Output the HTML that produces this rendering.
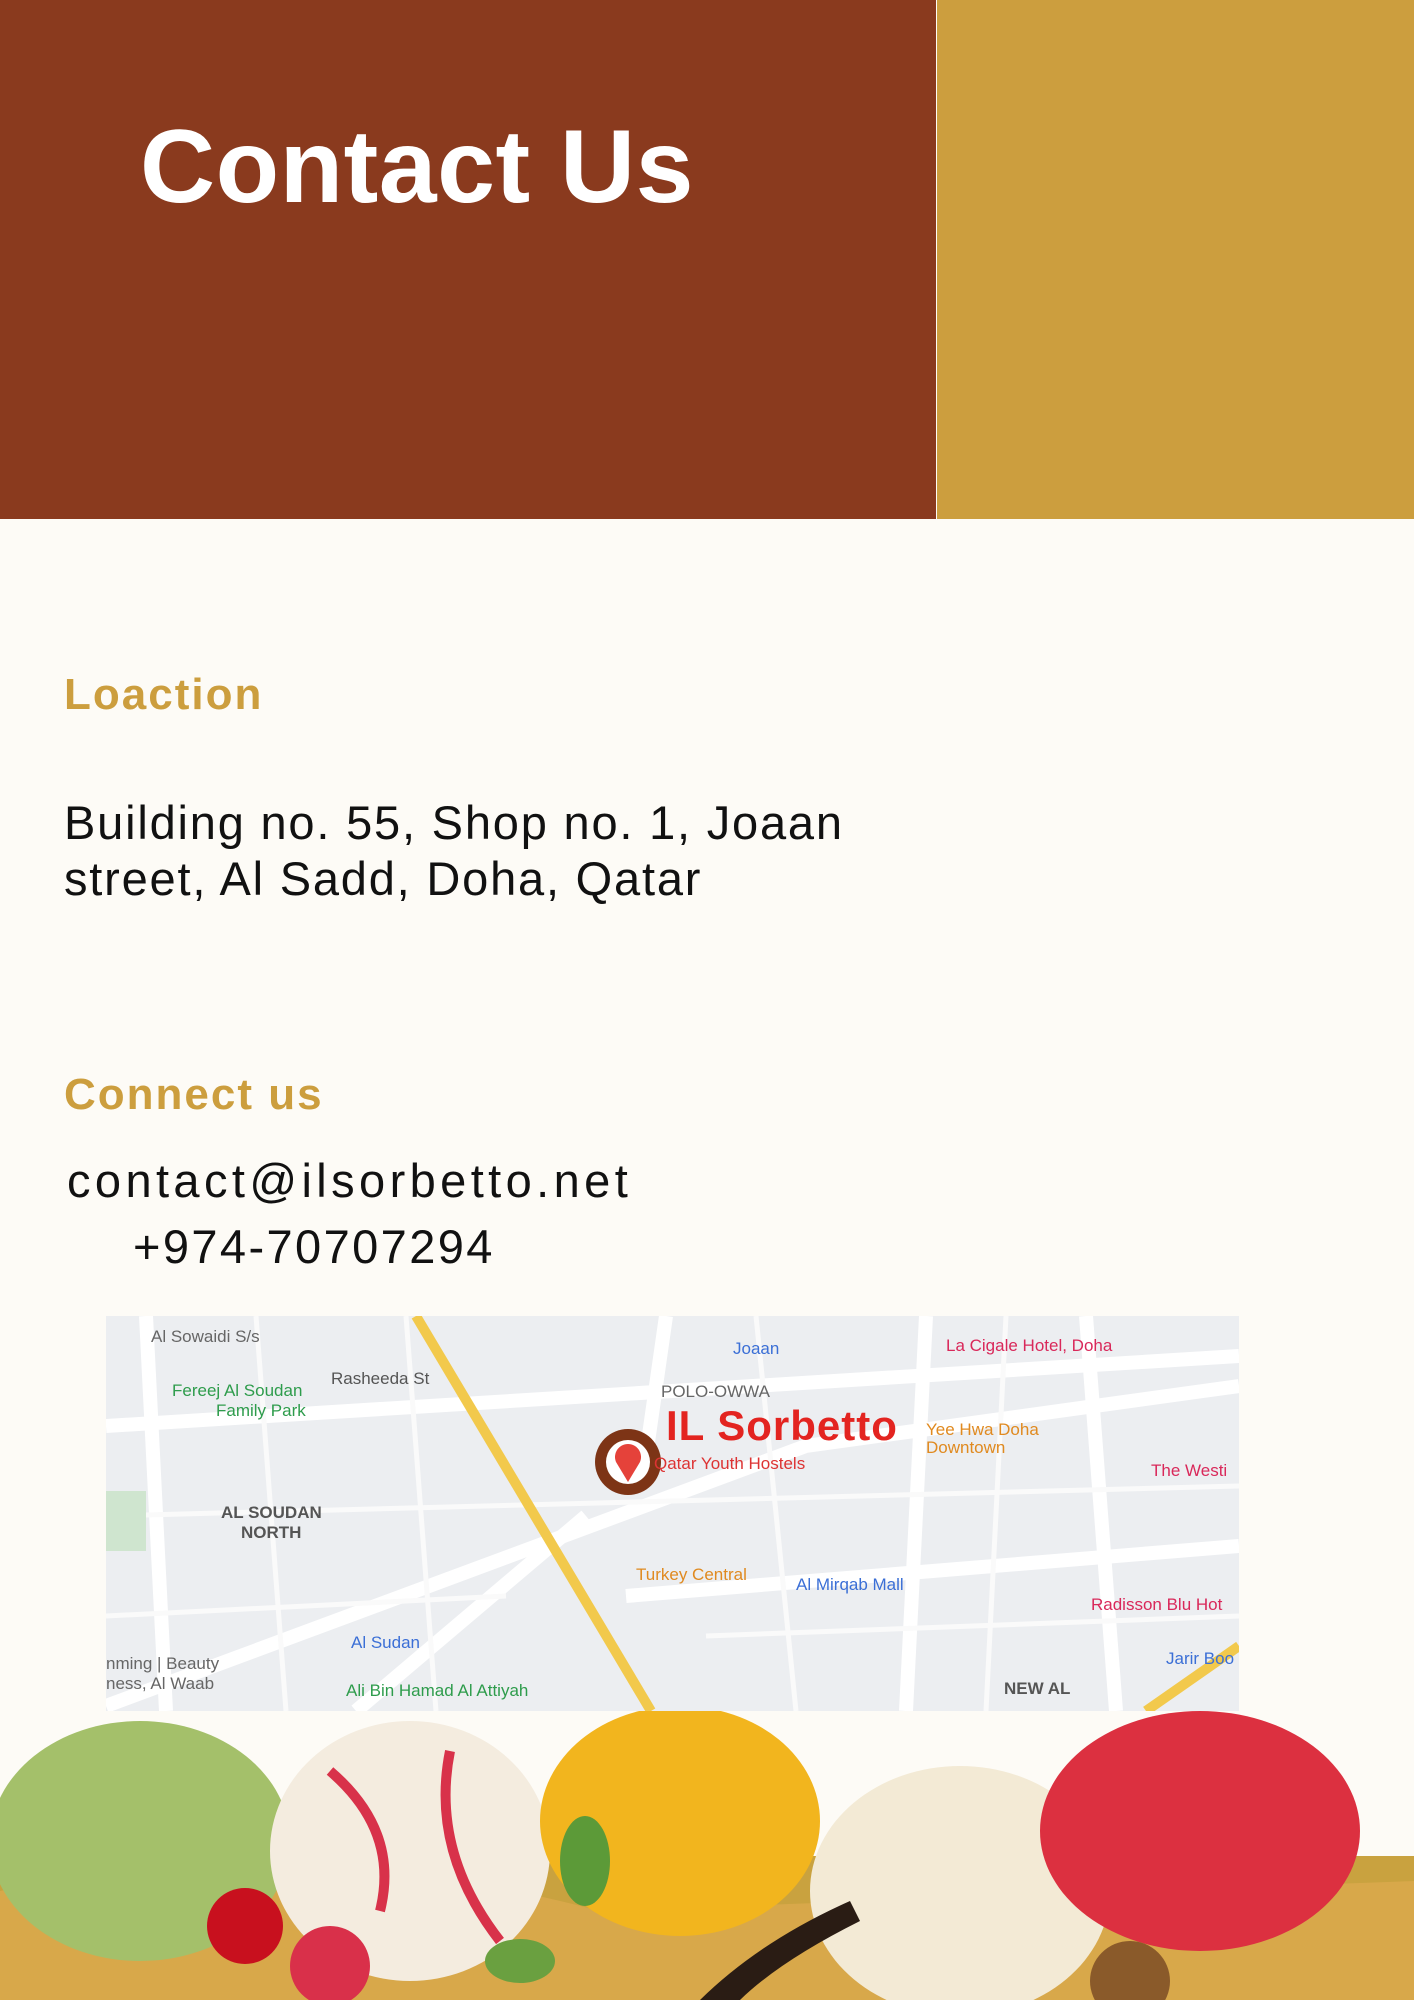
<!DOCTYPE html>
<html><head><meta charset="utf-8"><style>
*{margin:0;padding:0;box-sizing:border-box}
body{width:1414px;height:2000px;background:#fdfbf6;position:relative;overflow:hidden;font-family:"Liberation Sans","Noto Sans CJK SC",sans-serif}
.abs{position:absolute}
h1{position:absolute;left:140px;top:108px;font-size:104px;font-weight:bold;color:#fff;letter-spacing:0.5px}
.h2{position:absolute;left:64px;font-size:44px;font-weight:bold;color:#cc9e3e;letter-spacing:2px}
.t{position:absolute;font-size:47px;color:#111;line-height:56px;white-space:nowrap}
</style></head><body>
<div class="abs" style="left:0;top:0;width:936px;height:519px;background:#8a3a1e"></div>
<div class="abs" style="left:937px;top:0;width:477px;height:519px;background:#cc9e3e"></div>
<h1>Contact Us</h1>
<div class="h2" style="top:670px">Loaction</div>
<div class="t" style="left:64px;top:795px;letter-spacing:1.8px">Building no. 55, Shop no. 1, Joaan<br>street, Al Sadd, Doha, Qatar</div>
<div class="h2" style="top:1070px">Connect us</div>
<div class="t" style="left:67px;top:1153px;letter-spacing:4.4px">contact@ilsorbetto.net</div>
<div class="t" style="left:133px;top:1219px;letter-spacing:2.4px">+974-70707294</div>

<svg class="abs" style="left:106px;top:1316px" width="1133" height="395" viewBox="0 0 1133 395">
<rect width="1133" height="395" fill="#eceef1"/>
<g stroke="#fff" stroke-width="14" fill="none">
<path d="M0 110 L1133 40"/><path d="M0 390 L700 130 L1133 70"/><path d="M250 395 L480 200"/>
<path d="M800 395 L820 0"/><path d="M520 280 L1133 230"/><path d="M40 0 L60 395"/>
<path d="M560 0 L540 140"/><path d="M980 0 L1010 395"/>
</g>
<g stroke="#fafafa" stroke-width="5" fill="none">
<path d="M0 200 L1133 170"/><path d="M0 300 L400 280"/><path d="M150 0 L180 395"/><path d="M650 0 L690 395"/><path d="M900 0 L880 395"/><path d="M300 0 L330 395"/><path d="M600 320 L1133 300"/>
</g>
<path d="M310 0 L545 395" stroke="#f2c94c" stroke-width="10"/>
<path d="M1040 395 L1133 330" stroke="#f2c94c" stroke-width="10"/>
<rect x="0" y="175" width="40" height="60" fill="#cfe5cf"/>
<circle cx="522" cy="146" r="33" fill="#7d3416"/><circle cx="522" cy="146" r="22" fill="#fff"/>
<path d="M522 166 L510 146 A13 13 0 1 1 534 146 Z" fill="#e5423a"/>
<text x="560" y="124" font-size="42" font-weight="bold" fill="#e32420" font-family="Liberation Sans" letter-spacing="1">IL Sorbetto</text>
<g font-family="Liberation Sans" font-size="17">
<text x="45" y="26" fill="#666">Al Sowaidi S/s</text>
<text x="66" y="80" fill="#2e9c4c">Fereej Al Soudan</text><text x="110" y="100" fill="#2e9c4c">Family Park</text>
<text x="225" y="68" fill="#555">Rasheeda St</text>
<text x="627" y="38" fill="#3b6fd6">Joaan</text>
<text x="555" y="81" fill="#666">POLO-OWWA</text>
<text x="840" y="35" fill="#d9285a">La Cigale Hotel, Doha</text>
<text x="820" y="119" fill="#e08a20">Yee Hwa Doha</text><text x="820" y="137" fill="#e08a20">Downtown</text>
<text x="548" y="153" fill="#d33">Qatar Youth Hostels</text>
<text x="1045" y="160" fill="#d9285a">The Westi</text>
<text x="115" y="202" fill="#555" font-weight="bold">AL SOUDAN</text><text x="135" y="222" fill="#555" font-weight="bold">NORTH</text>
<text x="530" y="264" fill="#e08a20">Turkey Central</text>
<text x="690" y="274" fill="#3b6fd6">Al Mirqab Mall</text>
<text x="985" y="294" fill="#d9285a">Radisson Blu Hot</text>
<text x="1060" y="348" fill="#3b6fd6">Jarir Boo</text>
<text x="245" y="332" fill="#3b6fd6">Al Sudan</text>
<text x="240" y="380" fill="#2e9c4c">Ali Bin Hamad Al Attiyah</text>
<text x="898" y="378" fill="#555" font-weight="bold">NEW AL</text>
<text x="0" y="353" fill="#666">nming | Beauty</text><text x="0" y="373" fill="#666">ness, Al Waab</text>
</g>
</svg>

<svg class="abs" style="left:0;top:1711px" width="1414" height="289" viewBox="0 0 1414 289">
<rect x="0" y="145" width="1414" height="144" fill="#c9a23f"/>
<path d="M0 180 Q300 120 600 200 L1414 170 L1414 289 L0 289Z" fill="#d8a84a"/>
<ellipse cx="140" cy="130" rx="150" ry="120" fill="#a4c06a"/>
<ellipse cx="410" cy="140" rx="140" ry="130" fill="#f4ecdf"/>
<path d="M330 60 Q400 120 380 200 M450 40 Q430 140 500 230" stroke="#d8324a" stroke-width="10" fill="none"/>
<ellipse cx="680" cy="110" rx="140" ry="115" fill="#f2b51e"/>
<ellipse cx="960" cy="180" rx="150" ry="125" fill="#f3ead5"/>
<ellipse cx="1200" cy="120" rx="160" ry="120" fill="#dc3040"/>
<circle cx="245" cy="215" r="38" fill="#c8101e"/>
<circle cx="330" cy="255" r="40" fill="#d9304a"/>
<ellipse cx="520" cy="250" rx="35" ry="22" fill="#6aa040"/>
<ellipse cx="585" cy="150" rx="25" ry="45" fill="#5c9a38"/>
<path d="M700 289 Q760 230 850 190 L860 210 Q780 250 740 289Z" fill="#2a1c14"/>
<circle cx="1130" cy="270" r="40" fill="#8a5a2a"/>
</svg>
</body></html>
